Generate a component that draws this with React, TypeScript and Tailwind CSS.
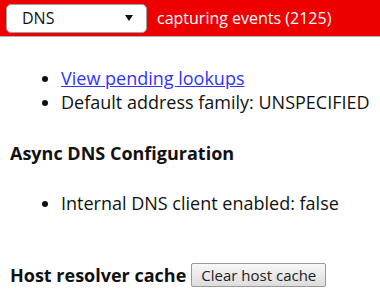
import React from "react";

export default function App() {
  return (
    <div className="w-[380px] h-[298px] bg-white overflow-hidden text-[18px] text-[#111]" style={{ fontFamily: '"Open Sans", "Liberation Sans", sans-serif' }}>
      <div className="h-[37px] bg-[#ee0000] border-b border-[#b0b0b0] flex items-center pl-[6px] gap-[10px]">
        <div className="w-[141px] h-[29px] bg-white rounded-[5px] border border-[#a0a0a0] flex items-center justify-between pl-[15px] pr-[13px]">
          <span className="text-[16px] text-[#111]">DNS</span>
          <svg width="8" height="6" viewBox="0 0 8 6"><path d="M0 0H8L4 6Z" fill="#111" /></svg>
        </div>
        <span className="text-white text-[16px]">capturing events (2125)</span>
      </div>
      <ul className="list-disc pl-[61px] mt-[29px]">
        <li className="leading-[24px]"><a href="#" className="text-[#3333ff] underline">View pending lookups</a></li>
        <li className="leading-[24px]">Default address family: UNSPECIFIED</li>
      </ul>
      <div className="font-bold mt-[27px] pl-[10px] leading-[24px]">Async DNS Configuration</div>
      <ul className="list-disc pl-[61px] mt-[26px]">
        <li className="leading-[24px]">Internal DNS client enabled: false</li>
      </ul>
      <div className="flex items-center pl-[10px] mt-[48px] gap-[5px]">
        <span className="font-bold leading-[24px]">Host resolver cache</span>
        <button className="h-[24px] px-[9px] border border-[#999] rounded-[2px] bg-gradient-to-b from-[#f8f8f8] to-[#dcdcdc] text-[15px] text-[#222] leading-[20px]">Clear host cache</button>
      </div>
    </div>
  );
}
